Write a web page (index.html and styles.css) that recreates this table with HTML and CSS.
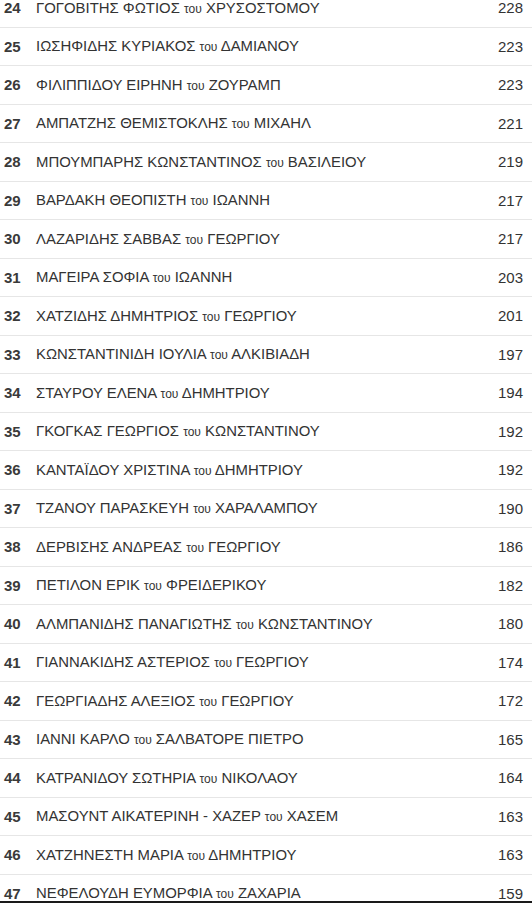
FILE: index.html
```html
<!DOCTYPE html>
<html lang="el">
<head>
<meta charset="utf-8">
<link rel="stylesheet" href="styles.css">
</head>
<body>
<div class="list">
  <div class="row"><span class="rank">24</span><span class="name">ΓΟΓΟΒΙΤΗΣ ΦΩΤΙΟΣ <small>του</small> ΧΡΥΣΟΣΤΟΜΟΥ</span><span class="score">228</span></div>
  <div class="row"><span class="rank">25</span><span class="name">ΙΩΣΗΦΙΔΗΣ ΚΥΡΙΑΚΟΣ <small>του</small> ΔΑΜΙΑΝΟΥ</span><span class="score">223</span></div>
  <div class="row"><span class="rank">26</span><span class="name">ΦΙΛΙΠΠΙΔΟΥ ΕΙΡΗΝΗ <small>του</small> ΖΟΥΡΑΜΠ</span><span class="score">223</span></div>
  <div class="row"><span class="rank">27</span><span class="name">ΑΜΠΑΤΖΗΣ ΘΕΜΙΣΤΟΚΛΗΣ <small>του</small> ΜΙΧΑΗΛ</span><span class="score">221</span></div>
  <div class="row"><span class="rank">28</span><span class="name">ΜΠΟΥΜΠΑΡΗΣ ΚΩΝΣΤΑΝΤΙΝΟΣ <small>του</small> ΒΑΣΙΛΕΙΟΥ</span><span class="score">219</span></div>
  <div class="row"><span class="rank">29</span><span class="name">ΒΑΡΔΑΚΗ ΘΕΟΠΙΣΤΗ <small>του</small> ΙΩΑΝΝΗ</span><span class="score">217</span></div>
  <div class="row"><span class="rank">30</span><span class="name">ΛΑΖΑΡΙΔΗΣ ΣΑΒΒΑΣ <small>του</small> ΓΕΩΡΓΙΟΥ</span><span class="score">217</span></div>
  <div class="row"><span class="rank">31</span><span class="name">ΜΑΓΕΙΡΑ ΣΟΦΙΑ <small>του</small> ΙΩΑΝΝΗ</span><span class="score">203</span></div>
  <div class="row"><span class="rank">32</span><span class="name">ΧΑΤΖΙΔΗΣ ΔΗΜΗΤΡΙΟΣ <small>του</small> ΓΕΩΡΓΙΟΥ</span><span class="score">201</span></div>
  <div class="row"><span class="rank">33</span><span class="name">ΚΩΝΣΤΑΝΤΙΝΙΔΗ ΙΟΥΛΙΑ <small>του</small> ΑΛΚΙΒΙΑΔΗ</span><span class="score">197</span></div>
  <div class="row"><span class="rank">34</span><span class="name">ΣΤΑΥΡΟΥ ΕΛΕΝΑ <small>του</small> ΔΗΜΗΤΡΙΟΥ</span><span class="score">194</span></div>
  <div class="row"><span class="rank">35</span><span class="name">ΓΚΟΓΚΑΣ ΓΕΩΡΓΙΟΣ <small>του</small> ΚΩΝΣΤΑΝΤΙΝΟΥ</span><span class="score">192</span></div>
  <div class="row"><span class="rank">36</span><span class="name">ΚΑΝΤΑΪΔΟΥ ΧΡΙΣΤΙΝΑ <small>του</small> ΔΗΜΗΤΡΙΟΥ</span><span class="score">192</span></div>
  <div class="row"><span class="rank">37</span><span class="name">ΤΖΑΝΟΥ ΠΑΡΑΣΚΕΥΗ <small>του</small> ΧΑΡΑΛΑΜΠΟΥ</span><span class="score">190</span></div>
  <div class="row"><span class="rank">38</span><span class="name">ΔΕΡΒΙΣΗΣ ΑΝΔΡΕΑΣ <small>του</small> ΓΕΩΡΓΙΟΥ</span><span class="score">186</span></div>
  <div class="row"><span class="rank">39</span><span class="name">ΠΕΤΙΛΟΝ ΕΡΙΚ <small>του</small> ΦΡΕΙΔΕΡΙΚΟΥ</span><span class="score">182</span></div>
  <div class="row"><span class="rank">40</span><span class="name">ΑΛΜΠΑΝΙΔΗΣ ΠΑΝΑΓΙΩΤΗΣ <small>του</small> ΚΩΝΣΤΑΝΤΙΝΟΥ</span><span class="score">180</span></div>
  <div class="row"><span class="rank">41</span><span class="name">ΓΙΑΝΝΑΚΙΔΗΣ ΑΣΤΕΡΙΟΣ <small>του</small> ΓΕΩΡΓΙΟΥ</span><span class="score">174</span></div>
  <div class="row"><span class="rank">42</span><span class="name">ΓΕΩΡΓΙΑΔΗΣ ΑΛΕΞΙΟΣ <small>του</small> ΓΕΩΡΓΙΟΥ</span><span class="score">172</span></div>
  <div class="row"><span class="rank">43</span><span class="name">ΙΑΝΝΙ ΚΑΡΛΟ <small>του</small> ΣΑΛΒΑΤΟΡΕ ΠΙΕΤΡΟ</span><span class="score">165</span></div>
  <div class="row"><span class="rank">44</span><span class="name">ΚΑΤΡΑΝΙΔΟΥ ΣΩΤΗΡΙΑ <small>του</small> ΝΙΚΟΛΑΟΥ</span><span class="score">164</span></div>
  <div class="row"><span class="rank">45</span><span class="name">ΜΑΣΟΥΝΤ ΑΙΚΑΤΕΡΙΝΗ - ΧΑΖΕΡ <small>του</small> ΧΑΣΕΜ</span><span class="score">163</span></div>
  <div class="row"><span class="rank">46</span><span class="name">ΧΑΤΖΗΝΕΣΤΗ ΜΑΡΙΑ <small>του</small> ΔΗΜΗΤΡΙΟΥ</span><span class="score">163</span></div>
  <div class="row"><span class="rank">47</span><span class="name">ΝΕΦΕΛΟΥΔΗ ΕΥΜΟΡΦΙΑ <small>του</small> ΖΑΧΑΡΙΑ</span><span class="score">159</span></div>
</div>
<div class="frame-bottom"></div>
</body>
</html>
```

FILE: styles.css
```css
html, body {
  margin: 0;
  padding: 0;
  background: #ffffff;
  overflow: hidden;
}
body {
  font-family: "Liberation Sans", Arial, sans-serif;
  color: #333333;
  font-size: 15px;
}
.list {
  margin-top: -11px;
}
.row {
  display: flex;
  align-items: center;
  height: 38.5px;
  box-sizing: border-box;
  border-bottom: 1px solid #e6e6e6;
  padding: 0 9px 0 4px;
}
.rank {
  width: 32px;
  flex: none;
  font-weight: bold;
  font-size: 15px;
  color: #3a3a3a;
}
.name {
  flex: 1;
  font-size: 14.9px;
  white-space: nowrap;
}
.name small {
  font-size: 12px;
}
.score {
  flex: none;
  font-size: 15px;
  text-align: right;
}
.frame-bottom {
  position: fixed;
  left: 0;
  right: 0;
  bottom: 0;
  height: 2px;
  background: #1a1a1a;
}
```
